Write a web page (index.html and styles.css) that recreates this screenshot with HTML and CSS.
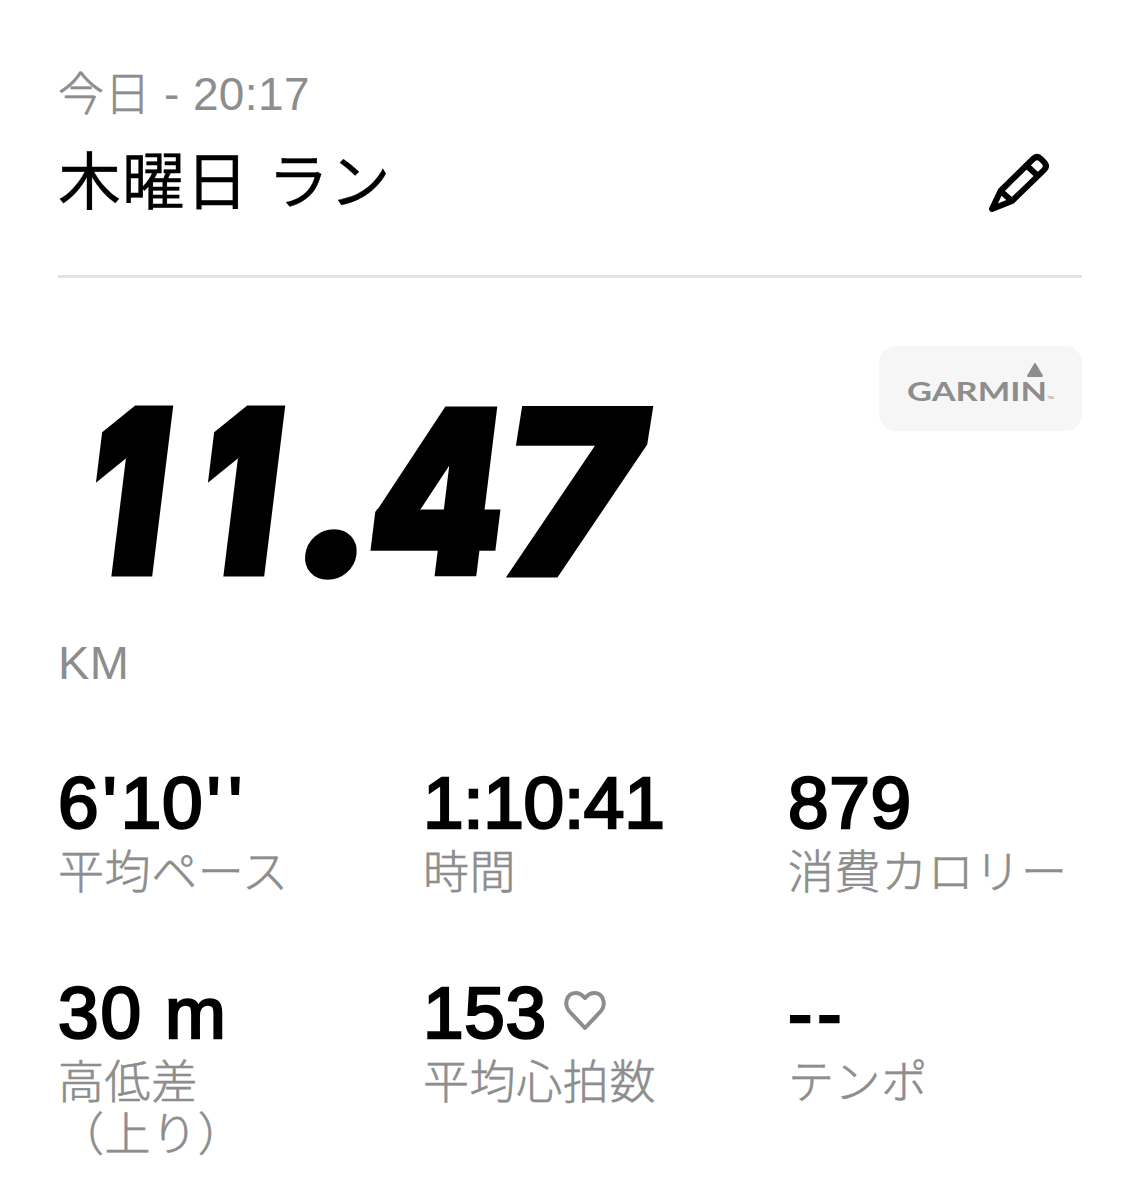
FILE: index.html
```html
<!DOCTYPE html>
<html lang="ja">
<head>
  <meta charset="UTF-8">
  <meta name="viewport" content="width=device-width, initial-scale=1.0">
  <title>木曜日 ラン</title>
  <link rel="stylesheet" href="styles.css">
</head>
<body>

  <header class="header">
    <p class="date"><span class="today">今日</span> - 20:17</p>
    <div class="title-row">
      <h1>木曜日 <span class="kana">ラン</span></h1>
      <button type="button" class="edit" aria-label="編集">
        <svg width="64" height="64" viewBox="0 0 64 64" fill="none" stroke="#000" stroke-width="6" stroke-linejoin="round">
          <path d="M5 59 L13.500 41 L46 9 Q50 5 54 9 L57 12 Q61 16 57 20 L25 51 Z"/>
          <path d="M13.500 41 L25 51 M39 15 L51 26"/>
        </svg>
      </button>
    </div>
  </header>

  <section class="distance">
    <div class="total">
      <p class="number"><span class="one">1</span><span class="one">1</span><span class="dot">.</span><span class="four">4</span><span class="seven">7</span></p>
      <p class="unit">KM</p>
    </div>
    <div class="source">
      <svg width="203" height="85" viewBox="0 0 203 85" fill="#8d8d8d">
        <path d="M156 18 L163 30 H149 Z" stroke="#8d8d8d" stroke-width="2" stroke-linejoin="round"/>
        <text class="brand" x="28" y="54.500" textLength="140" lengthAdjust="spacingAndGlyphs">GARMIN</text>
        <text class="tm" x="168" y="54.500">™</text>
      </svg>
    </div>
  </section>

  <section class="stats">
    <div class="stat">
      <p class="value pace"><span>6</span><span class="mark">'</span><span>10</span><span class="mark">'</span><span class="mark">'</span></p>
      <p class="label">平均ペース</p>
    </div>
    <div class="stat">
      <p class="value time">1:10:41</p>
      <p class="label">時間</p>
    </div>
    <div class="stat">
      <p class="value">879</p>
      <p class="label">消費カロリー</p>
    </div>
    <div class="stat">
      <p class="value climb">30 m</p>
      <p class="label">高低差<br>（上り）</p>
    </div>
    <div class="stat">
      <p class="value">153
        <svg class="heart" width="44" height="42" viewBox="0 0 44 42" fill="none" stroke="#8d8d8d" stroke-width="4" stroke-linejoin="round">
          <path d="M22 38 L6 21 C1 15 3 3 13 3 C18 3 20 6 22 8 C24 6 26 3 31 3 C41 3 43 15 38 21 Z"/>
        </svg>
      </p>
      <p class="label">平均心拍数</p>
    </div>
    <div class="stat">
      <p class="value cadence">--</p>
      <p class="label">テンポ</p>
    </div>
  </section>

</body>
</html>
```

FILE: styles.css
```css
body {
  margin: 0;
  padding: 0 58px;
  background-color: #fff;
  color: #000;
  font-family: "Liberation Sans", "Noto Sans CJK JP", sans-serif;
}

h1, p {
  margin: 0;
  font-weight: 400;
}

.header {
  padding-top: 64px;
  height: 211px;
  border-bottom: 3px solid #e3e3e3;
}

.date, .unit, .label {
  color: #8d8d8d;
  font-size: 46px;
  line-height: 60px;
  font-weight: 300;
}

.date {
  letter-spacing: 0.4px;
}

.today {
  -webkit-text-stroke: 0.6px #8d8d8d;
}

.unit {
  font-size: 47px;
  letter-spacing: 0.3px;
}

.title-row {
  display: flex;
  justify-content: space-between;
  align-items: center;
  height: 116px;
}

h1 {
  font-size: 63px;
  line-height: 82px;
  letter-spacing: 0.8px;
  -webkit-text-stroke: 0.3px #000;
}

.kana {
  font-size: 61px;
}

.edit {
  margin-right: 31px;
  padding: 0;
  border: none;
  background: none;
}

.edit svg, .source svg {
  display: block;
}

.distance {
  display: flex;
  justify-content: space-between;
  align-items: flex-start;
  padding-top: 68px;
  height: 414px;
}

.number {
  display: flex;
  height: 287px;
  padding-left: 34px;
  font-family: Inter, sans-serif;
  font-size: 235px;
  font-weight: 900;
  line-height: 292px;
}

.number span {
  transform: skewX(-7deg);
  transform-origin: 0 50%;
}

.number .one {
  width: 112px;
  transform: skewX(-7deg) scale(0.7, 0.935);
  -webkit-text-stroke: 12px #000;
}

.dot {
  width: 78px;
  margin-left: -21px;
  line-height: 288px;
  -webkit-text-stroke: 4px #000;
}

.number .four {
  width: 131px;
  transform: skewX(-7deg) scale(0.81, 0.96);
  -webkit-text-stroke: 7px #000;
}

.number .seven {
  transform: skewX(-9deg) scale(1.01, 0.985);
  -webkit-text-stroke: 3px #000;
}

.source {
  border-radius: 17px;
  background-color: #f6f6f6;
}

.brand {
  font-family: Lato, sans-serif;
  font-size: 27px;
  font-weight: 700;
}

.tm {
  font-size: 7px;
}

.stats {
  display: grid;
  grid-template-columns: repeat(3, 294px);
  column-gap: 71px;
  row-gap: 44px;
}

.value {
  display: flex;
  align-items: center;
  gap: 16px;
  height: 86px;
  font-size: 73px;
  line-height: 84px;
  letter-spacing: 0.6px;
  -webkit-text-stroke: 2.5px #000;
}

.pace {
  gap: 0;
}

.time {
  letter-spacing: -0.3px;
}

.mark {
  padding: 0 3.5px;
}

.climb {
  letter-spacing: 1.8px;
}

.cadence {
  letter-spacing: 5px;
}

.heart {
  margin-top: -5px;
}

.label {
  line-height: 52px;
  letter-spacing: 0.6px;
  -webkit-text-stroke: 0.6px #8d8d8d;
}

.stat {
  min-height: 166px;
}
```
